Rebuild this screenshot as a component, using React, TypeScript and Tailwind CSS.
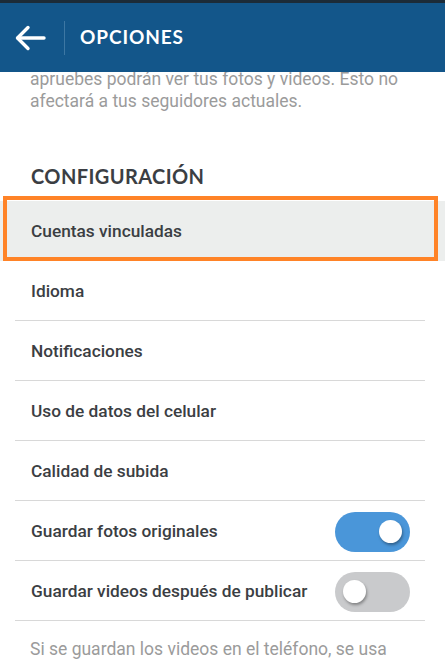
type Row = { label: string; toggle?: boolean; on?: boolean; active?: boolean };

const ROWS: Row[] = [
  { label: "Cuentas vinculadas", active: true },
  { label: "Idioma" },
  { label: "Notificaciones" },
  { label: "Uso de datos del celular" },
  { label: "Calidad de subida" },
  { label: "Guardar fotos originales", toggle: true, on: true },
  { label: "Guardar videos después de publicar", toggle: true, on: false },
];

function Toggle({ on }: { on: boolean }) {
  return (
    <div
      className={`flex items-center w-[75px] h-[40px] rounded-full px-[8px] ${
        on ? "bg-[#4a96d9] justify-end" : "bg-[#c9cacc] justify-start"
      }`}
    >
      <div className="w-[23px] h-[23px] rounded-full bg-white shadow-[1px_2px_3px_rgba(0,0,0,0.35)]" />
    </div>
  );
}

export default function App() {
  return (
    <div className="w-[445px] h-[659px] overflow-hidden bg-white font-['Roboto',sans-serif]">
      {/* Header */}
      <div className="relative z-10 border-t-[3px] border-[#1c2b38] bg-[#13568a] h-[72px] flex items-center">
        <div className="w-[64px] flex items-center pl-[15px]">
          <svg width="32" height="26" viewBox="0 0 32 26" fill="none" stroke="white" strokeWidth="3.4" strokeLinecap="round" strokeLinejoin="round">
            <path d="M3 13h26" />
            <path d="M13 2.5L2.5 13L13 23.5" />
          </svg>
        </div>
        <div className="w-px h-[34px] bg-[#3d77a3]" />
        <span className="ml-[15px] text-white text-[19px] font-bold tracking-[0.9px] font-['Lato',sans-serif]">
          OPCIONES
        </span>
      </div>

      {/* Content */}
      <div className="-mt-[4px]">
        <p className="px-[30px] text-[17.5px] leading-[22px] text-[#9b9b9b]">
          apruebes podrán ver tus fotos y videos. Esto no afectará a tus seguidores actuales.
        </p>

        <h2 className="mt-[52px] px-[31px] text-[20px] leading-[24px] font-bold tracking-[0.4px] text-[#3b3e43] font-['Lato',sans-serif]">
          CONFIGURACIÓN
        </h2>

        <div className="mt-[13px]">
          {ROWS.map((r) => (
            <div key={r.label} className={`relative ${r.active ? "bg-[#eceeed]" : ""}`}>
              <div className="ml-[15px] mr-[20px] h-[60px] flex items-center justify-between border-b border-[#d8d8d8] pl-[16px] pt-[2px]">
                <span className="text-[17.3px] font-medium text-[#3b3e43]">{r.label}</span>
                {r.toggle && (
                  <div className="mr-[15px]">
                    <Toggle on={!!r.on} />
                  </div>
                )}
              </div>
              {r.active && (
                <div className="absolute left-[3px] top-[-5px] w-[435px] h-[65px] border-[4.5px] border-[#ff8327]" />
              )}
            </div>
          ))}
        </div>

        <p className="mt-[17px] px-[30px] text-[17.5px] leading-[22px] text-[#9b9b9b]">
          Si se guardan los videos en el teléfono, se usa más espacio de almacenamiento.
        </p>
      </div>
    </div>
  );
}
